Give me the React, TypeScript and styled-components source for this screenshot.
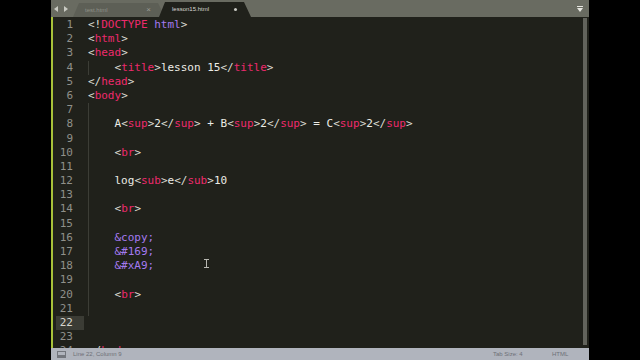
import React from 'react';
import styled, { createGlobalStyle } from 'styled-components';

const GlobalStyle = createGlobalStyle`
  html, body { margin: 0; padding: 0; background: #000; }
  #root { width: 640px; height: 360px; }
`;

const Stage = styled.div`
  width: 640px;
  height: 360px;
  background: #000;
  display: flex;
  justify-content: center;
  overflow: hidden;
`;

const Window = styled.div`
  position: relative;
  width: 538px;
  height: 360px;
  display: flex;
  flex-direction: column;
  background: #20211b;
`;

const TabBar = styled.div`
  flex: none;
  height: 17px;
  background: #696b61;
  display: flex;
  align-items: flex-end;
`;

const NavArrows = styled.div`
  width: 22px;
  height: 17px;
  display: flex;
  align-items: center;
  padding-left: 3px;
  box-sizing: border-box;
`;

const Tab = styled.div<{ $active?: boolean }>`
  position: relative;
  z-index: ${(p) => (p.$active ? 2 : 1)};
  width: 92px;
  height: ${(p) => (p.$active ? 15 : 14)}px;
  margin-left: ${(p) => (p.$active ? -6 : 0)}px;
  background: ${(p) => (p.$active ? '#20211b' : '#5d5f56')};
  clip-path: polygon(0 100%, 6px 0, calc(100% - 7px) 0, 100% 100%);
  display: flex;
  align-items: center;
  padding: 0 14px 1px ${(p) => (p.$active ? 13 : 12)}px;
  box-sizing: border-box;
  font-family: 'Liberation Sans', Arial, sans-serif;
  font-size: 6px;
  color: ${(p) => (p.$active ? '#d8d8d2' : '#8e9087')};
`;

const TabLabel = styled.span`
  flex: 1;
  white-space: nowrap;
`;

const TabClose = styled.span`
  font-size: 8px;
  line-height: 8px;
  color: #9a9b93;
`;

const TabDot = styled.span`
  width: 3px;
  height: 3px;
  border-radius: 50%;
  background: #c9c9c3;
`;

const BarSpacer = styled.div`
  flex: 1;
`;

const ListButton = styled.div`
  height: 17px;
  width: 12px;
  display: flex;
  align-items: center;
  justify-content: flex-start;
`;

const Body = styled.div`
  flex: 1;
  min-height: 0;
  display: flex;
  border-left: 2px solid #a8c23a;
  overflow: hidden;
`;

const Gutter = styled.div`
  flex: none;
  width: 32px;
  padding-top: 1px;
  font-family: 'DejaVu Sans Mono', 'Liberation Mono', monospace;
  font-size: 11px;
  line-height: 14.2px;
`;

const LineNo = styled.div<{ $current?: boolean }>`
  height: 14.2px;
  margin: 0 1px 0 3px;
  padding-right: 11px;
  text-align: right;
  color: ${(p) => (p.$current ? '#d6d6ce' : '#8f908a')};
  background: ${(p) => (p.$current ? '#3b3c35' : 'transparent')};
`;

const Code = styled.div`
  flex: 1;
  padding: 1px 0 0 3px;
  font-family: 'DejaVu Sans Mono', 'Liberation Mono', monospace;
  font-size: 11px;
  line-height: 14.2px;
  white-space: pre;
`;

const Line = styled.div<{ $guide?: boolean }>`
  height: 14.2px;
  box-shadow: ${(p) => (p.$guide ? 'inset 1px 0 0 #3c3d36' : 'none')};
`;

const COLORS: Record<string, string> = {
  p: '#dcdcd4',
  t: '#ee2a6d',
  x: '#ecece6',
  e: '#a47af0',
};

const Tok = styled.span<{ $k: string }>`
  color: ${(p) => COLORS[p.$k]};
`;

const Scroll = styled.div`
  flex: none;
  width: 6px;
  padding: 1px 0 3px;
  box-sizing: border-box;
  display: flex;
`;

const Thumb = styled.div`
  width: 4px;
  background: #62635c;
`;

const StatusBar = styled.div`
  flex: none;
  height: 12px;
  background: #b0b4bd;
  display: flex;
  align-items: center;
  padding-left: 6px;
  font-family: 'Liberation Sans', Arial, sans-serif;
  font-size: 6px;
  color: #6d7077;
`;

const StatusText = styled.span`
  margin-left: 7px;
  white-space: nowrap;
`;

const StatusCell = styled.span<{ $w: number }>`
  width: ${(p) => p.$w}px;
  white-space: nowrap;
`;

const Pointer = styled.svg`
  position: absolute;
  left: 153px;
  top: 259px;
`;

type Seg = [string, string];
const P = (s: string): Seg => ['p', s];
const T = (s: string): Seg => ['t', s];
const X = (s: string): Seg => ['x', s];
const E = (s: string): Seg => ['e', s];
const open = (n: string): Seg[] => [P('<'), T(n), P('>')];
const close = (n: string): Seg[] => [P('</'), T(n), P('>')];
const IND = X('    ');

const lines: { segs: Seg[]; guide?: boolean }[] = [
  { segs: [P('<!'), T('DOCTYPE'), X(' '), E('html'), P('>')] },
  { segs: open('html') },
  { segs: open('head') },
  { segs: [IND, ...open('title'), X('lesson 15'), ...close('title')], guide: true },
  { segs: close('head') },
  { segs: open('body') },
  { segs: [], guide: true },
  {
    segs: [
      IND, X('A'), ...open('sup'), X('2'), ...close('sup'),
      X(' + B'), ...open('sup'), X('2'), ...close('sup'),
      X(' = C'), ...open('sup'), X('2'), ...close('sup'),
    ],
    guide: true,
  },
  { segs: [], guide: true },
  { segs: [IND, ...open('br')], guide: true },
  { segs: [], guide: true },
  { segs: [IND, X('log'), ...open('sub'), X('e'), ...close('sub'), X('10')], guide: true },
  { segs: [], guide: true },
  { segs: [IND, ...open('br')], guide: true },
  { segs: [], guide: true },
  { segs: [IND, E('&copy;')], guide: true },
  { segs: [IND, E('&#169;')], guide: true },
  { segs: [IND, E('&#xA9;')], guide: true },
  { segs: [], guide: true },
  { segs: [IND, ...open('br')], guide: true },
  { segs: [], guide: true },
  { segs: [] },
  { segs: [] },
  { segs: close('body') },
];

export default function App() {
  return (
    <>
      <GlobalStyle />
      <Stage>
        <Window>
          <TabBar>
            <NavArrows>
              <svg width="14" height="6" viewBox="0 0 14 6">
                <polygon points="0,3 4,0 4,6" fill="#c9cac2" />
                <polygon points="10,0 14,3 10,6" fill="#c9cac2" />
              </svg>
            </NavArrows>
            <Tab>
              <TabLabel>test.html</TabLabel>
              <TabClose>×</TabClose>
            </Tab>
            <Tab $active>
              <TabLabel>lesson15.html</TabLabel>
              <TabDot />
            </Tab>
            <BarSpacer />
            <ListButton>
              <svg width="6" height="6" viewBox="0 0 6 6">
                <rect x="0" y="0" width="6" height="1" fill="#e6e6e0" />
                <polygon points="0,2 6,2 3,6" fill="#e6e6e0" />
              </svg>
            </ListButton>
          </TabBar>
          <Body>
            <Gutter>
              {lines.map((_, i) => (
                <LineNo key={i} $current={i === 21}>
                  {i + 1}
                </LineNo>
              ))}
            </Gutter>
            <Code>
              {lines.map((l, i) => (
                <Line key={i} $guide={l.guide}>
                  {l.segs.map(([k, s], j) => (
                    <Tok key={j} $k={k}>
                      {s}
                    </Tok>
                  ))}
                </Line>
              ))}
            </Code>
            <Scroll>
              <Thumb />
            </Scroll>
          </Body>
          <StatusBar>
            <svg width="9" height="7" viewBox="0 0 9 7">
              <rect x="0.5" y="0.5" width="8" height="6" fill="none" stroke="#73767d" />
              <rect x="1" y="4" width="7" height="2" fill="#73767d" />
            </svg>
            <StatusText>Line 22, Column 9</StatusText>
            <BarSpacer />
            <StatusCell $w={59}>Tab Size: 4</StatusCell>
            <StatusCell $w={37}>HTML</StatusCell>
          </StatusBar>
          <Pointer width="5" height="9" viewBox="0 0 5 9">
            <path d="M0 0.5h5 M2.5 0.5v8 M0 8.5h5" stroke="#b8b8b2" strokeWidth="1" fill="none" />
          </Pointer>
        </Window>
      </Stage>
    </>
  );
}
